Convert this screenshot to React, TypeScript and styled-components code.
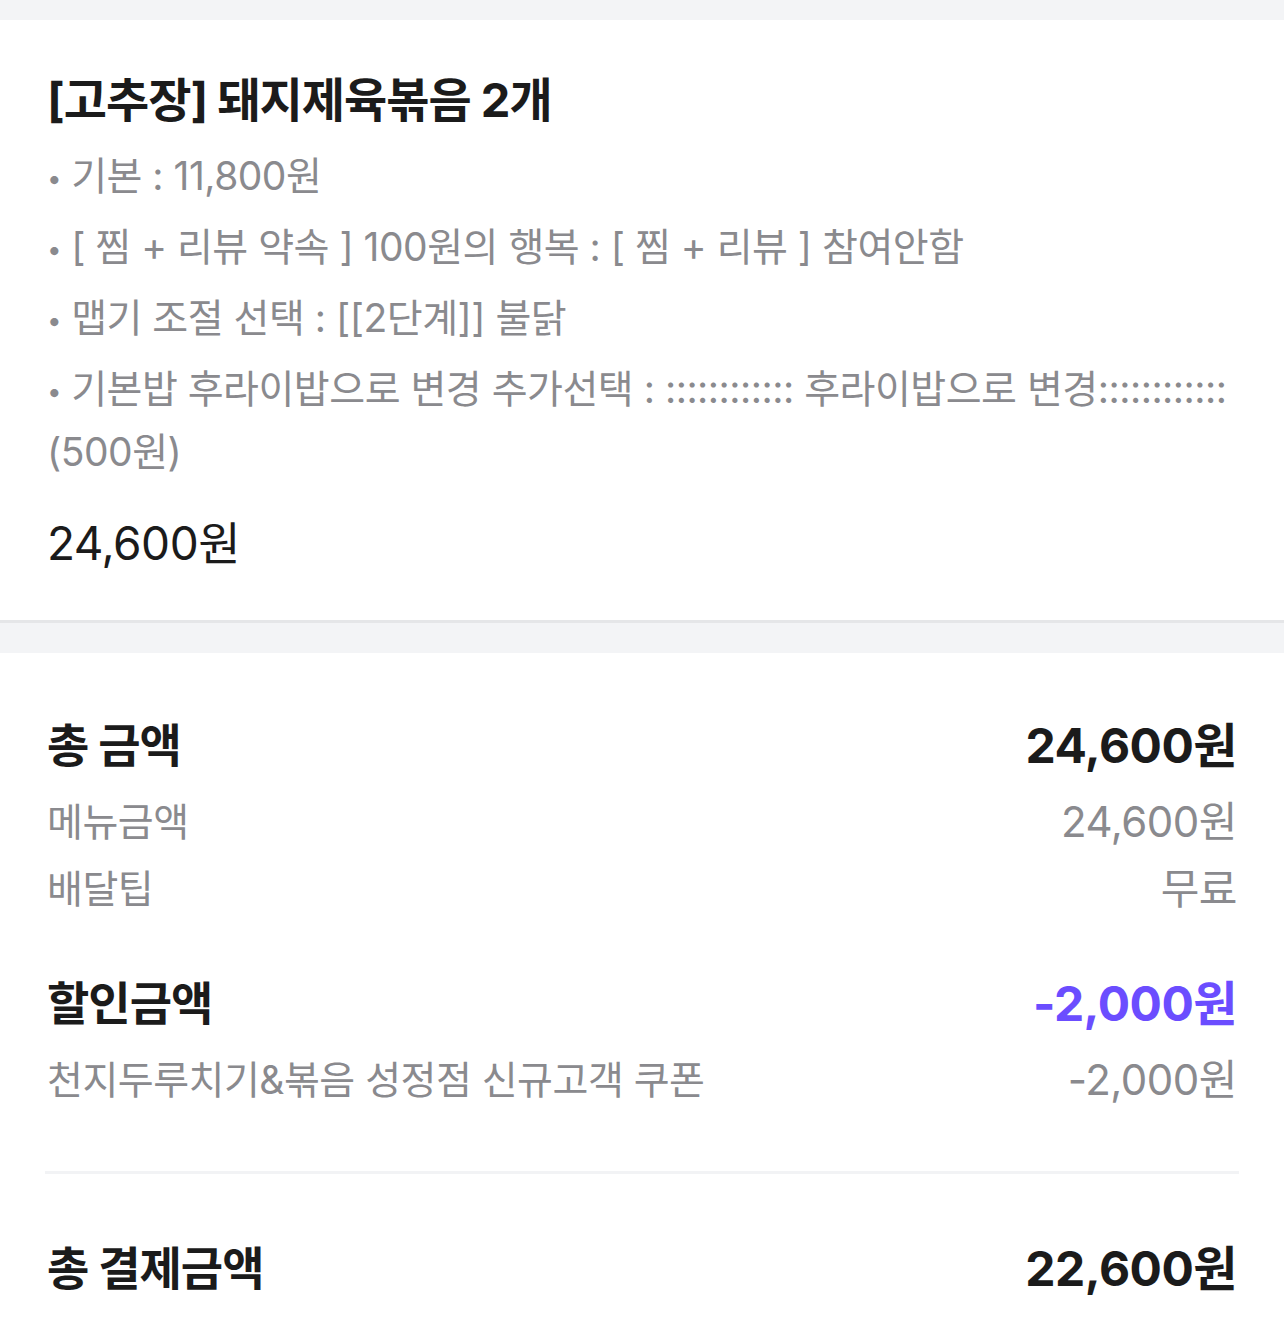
import React from 'react';
import styled, { createGlobalStyle } from 'styled-components';

const GlobalStyle = createGlobalStyle`
	html, body {
		margin: 0;
		padding: 0;
		background: #f3f4f6;
	}
	body {
		font-family: 'Inter', 'Noto Sans CJK KR', sans-serif;
		-webkit-font-smoothing: antialiased;
	}
`;

const Page = styled.div`
	width: 1284px;
	padding-top: 20px;
	background: #f3f4f6;
`;

const MenuCard = styled.section`
	background: #ffffff;
	padding: 50px 47px 47px;
	border-bottom: 3px solid #e5e6e8;
	margin-bottom: 30px;
`;

const MenuTitle = styled.h2`
	margin: 0;
	font-size: 47px;
	line-height: 60px;
	font-weight: 700;
	color: #1b1b1b;
	letter-spacing: -1px;
`;

const OptionList = styled.ul`
	list-style: none;
	margin: 14px 0 0;
	padding: 0;
	display: flex;
	flex-direction: column;
	gap: 8px;
`;

const OptionItem = styled.li`
	font-size: 39px;
	line-height: 63px;
	color: #8a8a8e;
	letter-spacing: -0.5px;
	word-break: keep-all;
	&::before {
		content: '•';
		font-size: 26px;
		line-height: 0;
		margin-right: 10px;
		position: relative;
		top: -2px;
	}
`;

const MenuPrice = styled.div`
	margin-top: 30px;
	font-size: 46px;
	line-height: 60px;
	color: #1b1b1b;
	letter-spacing: -0.5px;
`;

const Summary = styled.section`
	background: #ffffff;
	padding: 56px 47px 40px;
`;

const Group = styled.div`
	display: flex;
	flex-direction: column;
	& + & {
		margin-top: 48px;
	}
`;

const HeadRow = styled.div`
	display: flex;
	justify-content: space-between;
	align-items: center;
	height: 66px;
	margin-bottom: 10px;
	font-size: 46px;
	font-weight: 700;
	color: #1b1b1b;
	letter-spacing: -1px;
`;

const Amount = styled.span<{ $accent?: boolean }>`
	font-size: 48px;
	font-weight: 700;
	color: ${(p) => (p.$accent ? '#6b4dff' : '#1b1b1b')};
	letter-spacing: -0.5px;
`;

const SubRow = styled.div`
	display: flex;
	justify-content: space-between;
	align-items: center;
	height: 67px;
	font-size: 39px;
	color: #8a8a8e;
	letter-spacing: -0.5px;
`;

const SubValue = styled.span`
	font-size: 42px;
`;

const Divider = styled.hr`
	border: none;
	height: 3px;
	background: #f2f3f5;
	margin: 61px -2px 58px;
`;

const TotalRow = styled(HeadRow)`
	margin-bottom: 0;
`;

const options = [
	'기본 : 11,800원',
	'[ 찜 + 리뷰 약속 ] 100원의 행복 : [ 찜 + 리뷰 ] 참여안함',
	'맵기 조절 선택 : [[2단계]] 불닭',
	'기본밥 후라이밥으로 변경 추가선택 : :::::::::::: 후라이밥으로 변경::::::::::::(500원)',
];

const App = () => {
	return (
		<Page>
			<GlobalStyle />
			<MenuCard>
				<MenuTitle>[고추장] 돼지제육볶음 2개</MenuTitle>
				<OptionList>
					{options.map((text) => (
						<OptionItem key={text}>{text}</OptionItem>
					))}
				</OptionList>
				<MenuPrice>24,600원</MenuPrice>
			</MenuCard>
			<Summary>
				<Group>
					<HeadRow>
						<span>총 금액</span>
						<Amount>24,600원</Amount>
					</HeadRow>
					<SubRow>
						<span>메뉴금액</span>
						<SubValue>24,600원</SubValue>
					</SubRow>
					<SubRow>
						<span>배달팁</span>
						<SubValue>무료</SubValue>
					</SubRow>
				</Group>
				<Group>
					<HeadRow>
						<span>할인금액</span>
						<Amount $accent>-2,000원</Amount>
					</HeadRow>
					<SubRow>
						<span>천지두루치기&amp;볶음 성정점 신규고객 쿠폰</span>
						<SubValue>-2,000원</SubValue>
					</SubRow>
				</Group>
				<Divider />
				<TotalRow>
					<span>총 결제금액</span>
					<Amount>22,600원</Amount>
				</TotalRow>
			</Summary>
		</Page>
	);
};

export default App;
